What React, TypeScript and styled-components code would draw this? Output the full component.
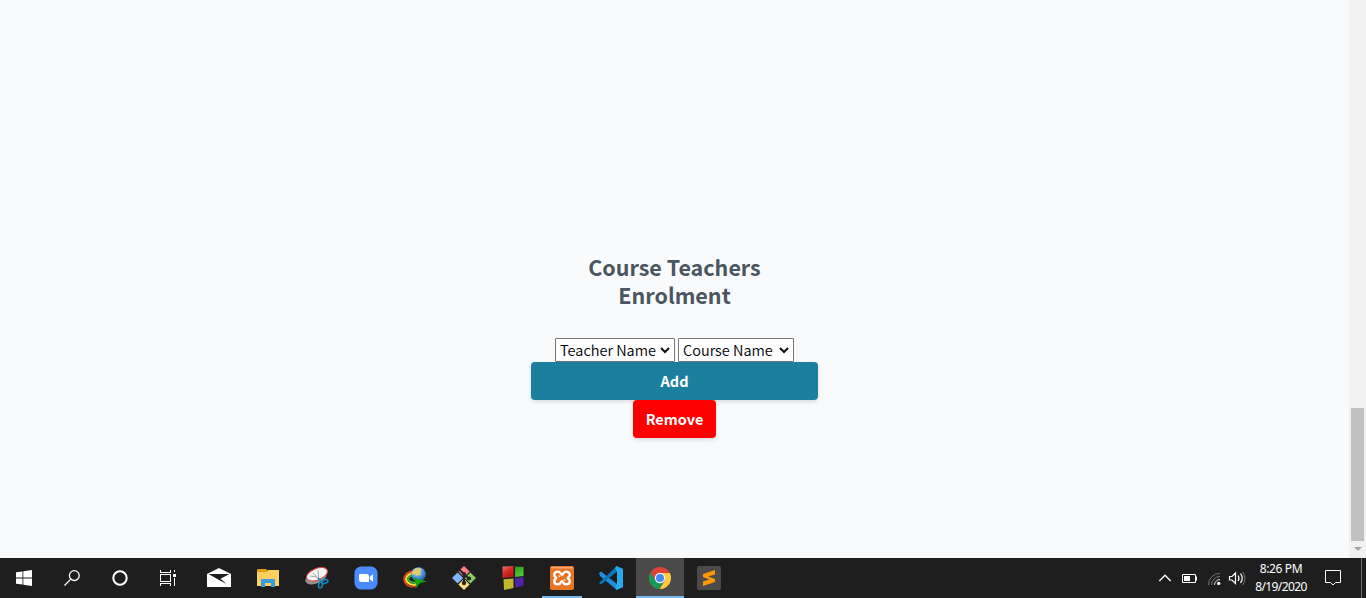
import React from "react";
import styled, { createGlobalStyle } from "styled-components";

const Global = createGlobalStyle`
  * { box-sizing: border-box; }
  body { margin: 0; background: #f8fafc; overflow: hidden; }
`;

const Screen = styled.div`
  display: flex;
  flex-direction: column;
  width: 1366px;
  height: 598px;
  font-family: "Noto Sans CJK SC", "Source Sans Pro", sans-serif;
`;

const Viewport = styled.div`
  display: flex;
  height: 558px;
`;

const Page = styled.main`
  flex: 1;
  display: flex;
  flex-direction: column;
  align-items: center;
  padding-top: 253px;
  background: #f8fafc;
`;

const Title = styled.h2`
  margin: 0 0 29px;
  width: 287px;
  color: #4a5560;
  font-size: 21.5px;
  font-weight: 700;
  line-height: 28px;
  text-align: center;
`;

const Fields = styled.div`
  display: flex;
  gap: 3px;
`;

const SelectBox = styled.button<{ $width: number }>`
  display: flex;
  align-items: center;
  justify-content: space-between;
  width: ${(p) => p.$width}px;
  height: 24px;
  padding: 0 4px;
  border: 1px solid #767676;
  border-radius: 1px;
  background: #fff;
  color: #000;
  font-family: inherit;
  font-size: 14.5px;
  font-weight: 350;
  line-height: 22px;
  white-space: nowrap;
`;

const Action = styled.button<{ $color: string; $width: number }>`
  width: ${(p) => p.$width}px;
  height: 38px;
  padding: 0;
  border: 0;
  border-radius: 4px;
  background: ${(p) => p.$color};
  box-shadow: 0 2px 4px rgba(0, 0, 0, 0.12);
  color: #fff;
  font-family: inherit;
  font-size: 14.5px;
  font-weight: 700;
  line-height: 38px;
`;

const Scrollbar = styled.div`
  display: flex;
  flex-direction: column;
  align-items: center;
  justify-content: flex-end;
  width: 17px;
  background: #f1f1f1;
`;

const Thumb = styled.div`
  width: 13px;
  height: 133px;
  background: #c1c1c1;
`;

const ScrollArrow = styled.div`
  display: flex;
  align-items: center;
  justify-content: center;
  height: 17px;
  padding-bottom: 1px;
`;

const Taskbar = styled.footer`
  display: flex;
  height: 40px;
  background: #1e1e1e;
`;

const SystemButtons = styled.div`
  display: flex;
  width: 195px;
`;

const Apps = styled.div`
  display: flex;
  flex: 1;
  gap: 1px;
`;

const Slot = styled.div<{ $active?: boolean }>`
  display: flex;
  align-items: center;
  justify-content: center;
  width: 48px;
  height: 40px;
  background: ${(p) => (p.$active ? "#4b4b4b" : "transparent")};
  box-shadow: ${(p) => (p.$active ? "inset 0 -2px #76b9ed" : "none")};
`;

const RunningSlot = styled(Slot)`
  width: 40px;
  margin: 0 4px;
  box-shadow: inset 0 -2px #76b9ed;
`;

const Tray = styled.div`
  display: flex;
  align-items: center;
  padding-right: 4px;
`;

const TrayIcons = styled.div`
  display: flex;
  align-items: center;
  width: 98px;
`;

const Clock = styled.div`
  width: 62px;
  color: #fff;
  font-family: "Noto Sans", "Segoe UI", sans-serif;
  font-size: 12px;
  letter-spacing: -0.6px;
  line-height: 18px;
  text-align: center;
`;

const Time = styled.div`
  letter-spacing: -0.35px;
`;

const Notifications = styled.div`
  display: flex;
  justify-content: center;
  width: 42px;
`;

const DesktopEdge = styled.div`
  width: 1px;
  height: 40px;
  margin-left: 7px;
  background: #6e6e6e;
`;

const Chevron = () => (
  <svg width="10" height="7" viewBox="0 0 10 7">
    <path d="M1 1 5 5 9 1" fill="none" stroke="#111" strokeWidth="2" />
  </svg>
);

const WindowsIcon = () => (
  <svg width="16" height="16" viewBox="0 0 16 16" fill="#fff">
    <path d="M0 2.3 6.5 1.4V7.5H0zM7.3 1.3 16 0V7.5H7.3zM0 8.4H6.5V14.6L0 13.7zM7.3 8.4H16V16L7.3 14.7z" />
  </svg>
);
const SearchIcon = () => (
  <svg width="16" height="16" viewBox="0 0 16 16" fill="none" stroke="#fff" strokeWidth="1.3">
    <circle cx="10.3" cy="5.6" r="4.9" />
    <path d="M6.8 9.1.5 15.5" />
  </svg>
);
const CortanaIcon = () => (
  <svg width="16" height="16" viewBox="0 0 16 16">
    <circle cx="8" cy="8" r="6.7" fill="none" stroke="#fff" strokeWidth="2" />
  </svg>
);
const TaskViewIcon = () => (
  <svg width="16" height="16" viewBox="0 0 16 16" fill="none" stroke="#fff" shapeRendering="crispEdges">
    <path d="M.5 0V2.5H10.5V0M.5 16V13.5H10.5V16M.5 4.5H10.5V11.5H.5zM14.5 0V2M14.5 8V16" />
    <path d="M13 4H16V7H13z" fill="#fff" stroke="none" />
  </svg>
);
const MailIcon = () => (
  <svg width="24" height="20" viewBox="0 0 24 20">
    <path d="M0 6 12 0 24 6V19H0z" fill="#fff" />
    <path d="M1.5 6H22.5L13.5 10.8 19.5 16 8.5 10z" fill="#1e1e1e" />
  </svg>
);
const FolderIcon = () => (
  <svg width="22" height="18" viewBox="0 0 22 18">
    <path d="M0 1Q0 0 1 0H9L10.5 1.5H21V17H0z" fill="#e3a008" />
    <path d="M0 3H10L11 1H22V17H0z" fill="#fcd060" />
    <path d="M4 18V11Q4 10 5 10H17Q18 10 18 11V18H14V14H8V18z" fill="#3c9bdc" />
  </svg>
);
const SnipIcon = () => (
  <svg width="24" height="22" viewBox="0 0 24 22">
    <ellipse cx="11" cy="10.5" rx="11.2" ry="6" transform="rotate(-22 11 10.5)" fill="#929292" />
    <ellipse cx="12" cy="7.3" rx="11" ry="5.8" transform="rotate(-22 12 7.3)" fill="#f6f5f5" stroke="#d94545" />
    <path d="M8 6 15 13M13 3 14 13M5 9 12 10" stroke="#a5a9ab" strokeWidth="1" />
    <g fill="none" stroke="#1b84bd" strokeWidth="1.7">
      <ellipse cx="19.8" cy="14.6" rx="3.2" ry="1.8" transform="rotate(-18 19.8 14.6)" />
      <ellipse cx="15.5" cy="18" rx="1.9" ry="3" transform="rotate(15 15.5 18)" />
      <path d="M13 11 17 15" />
    </g>
  </svg>
);
const ZoomIcon = () => (
  <svg width="24" height="24" viewBox="0 0 24 24">
    <rect x=".5" y=".5" width="23" height="23" rx="6.5" fill="#4a8cff" />
    <path d="M5 8H12.5Q15 8 15 10.5V16H7.5Q5 16 5 13.5zM15.8 10.8 19 8.3V15.7L15.8 13.3z" fill="#fff" />
  </svg>
);
const IdmIcon = () => (
  <svg width="24" height="22" viewBox="0 0 24 22">
    <defs>
      <radialGradient id="globe" cx=".4" cy=".3" r=".75">
        <stop stopColor="#d9efff" /><stop offset=".45" stopColor="#5aa2e5" /><stop offset="1" stopColor="#1450a6" />
      </radialGradient>
    </defs>
    <g fill="none" strokeWidth="2">
      <path d="M9 4.2C1 6.5-.5 12 2.8 16.5S10 20 14 18.5" stroke="#e33b22" />
      <path d="M9.5 6C3.5 8 1.5 12 4.5 15.2S11 18.2 14 17" stroke="#f5e52a" />
      <path d="M9.5 8C5.5 9.5 4 12 6 13.8S11 16.3 14 15.3" stroke="#3cae36" />
    </g>
    <circle cx="15.5" cy="7.5" r="7.3" fill="url(#globe)" />
    <path d="M9 5Q12 .8 17 1L18.5 3 17 5 18 8 13 8.5 11 7 9 8z" fill="#e0cc66" />
    <path d="M10 10.5 24 14.5 17 16 12.5 21.5 13 15.5z" fill="#13a711" />
  </svg>
);
const GitIcon = () => (
  <svg width="24" height="24" viewBox="0 0 24 24">
    <path d="M12 0 17.6 5.6 12 11.2 6.4 5.6z" fill="#ff7d85" />
    <path d="M18.4 6.4 24 12 18.4 17.6 12.8 12z" fill="#88cc60" />
    <path d="M12 12.8 17.6 18.4 12 24 6.4 18.4z" fill="#ffe07a" />
    <path d="M5.6 6.4 11.2 12 5.6 17.6 0 12z" fill="#80b4ff" />
    <path d="M7 3.5 12 8V18M12 8 17 13" stroke="#262626" strokeWidth="2" fill="none" />
    <g fill="#262626"><circle cx="12" cy="8" r="2.1" /><circle cx="17" cy="12.5" r="2.1" /><circle cx="12" cy="17" r="2.2" /></g>
  </svg>
);
const BlocksIcon = () => (
  <svg width="22" height="24" viewBox="0 0 22 24">
    <defs>
      <linearGradient id="redBlock" x2=".6" y2="1"><stop stopColor="#f08078" /><stop offset=".5" stopColor="#d52b24" /><stop offset="1" stopColor="#b51b16" /></linearGradient>
      <linearGradient id="greenBlock" x2=".6" y2="1"><stop stopColor="#2b941b" /><stop offset="1" stopColor="#55d03a" /></linearGradient>
    </defs>
    <path d="M.5.5 11.5 0V11L.5 12z" fill="url(#redBlock)" />
    <path d="M13 .5 21.5 1V10L13 11z" fill="url(#greenBlock)" />
    <path d="M1.5 13.2 11.5 12.5V22L2 24z" fill="#bdb82c" />
    <path d="M13 12.2 21.5 11.2V20L13 21.5z" fill="#5123ad" />
  </svg>
);
const XamppIcon = () => (
  <svg width="24" height="24" viewBox="0 0 24 24">
    <rect width="24" height="24" rx="2" fill="#e87524" />
    <path d="M1 1H23V2.5H1z" fill="#f5a574" />
    <path d="M12 8.7C10.8 8.7 10.8 5.6 8 5.6 5.6 5.6 4.2 7.2 4.2 9 4.2 10.8 6.2 11 6.2 12S4.2 13.2 4.2 15C4.2 16.8 5.6 18.4 8 18.4 10.8 18.4 10.8 15.3 12 15.3S13.2 18.4 16 18.4C18.4 18.4 19.8 16.8 19.8 15 19.8 13.2 17.8 13 17.8 12S19.8 10.8 19.8 9C19.8 7.2 18.4 5.6 16 5.6 13.2 5.6 13.2 8.7 12 8.7z" fill="none" stroke="#fff" strokeWidth="2.4" strokeLinejoin="round" />
    <path d="M9.5 9.5V10.8M14.5 13.2V14.5" stroke="#fff" strokeWidth="1.6" />
  </svg>
);
const CodeIcon = () => (
  <svg width="24" height="24" viewBox="0 0 24 24">
    <path d="M0 7 2 5.5 18 18V24L1 10z" fill="#208fdd" />
    <path d="M0 17 17.5.2V6L2 18.5z" fill="#0877bb" />
    <path d="M17.5 0 24 2.7V21.3L17.5 24 16 22 18 18V6L16 2z" fill="#28a9ee" />
  </svg>
);
const ChromeIcon = () => (
  <svg width="22" height="22" viewBox="0 0 22 22">
    <circle cx="11" cy="11" r="11" fill="#dc4437" />
    <path d="M1.5 5.5A11 11 0 0 0 10.8 22L15.5 13.5H6.5z" fill="#149b57" />
    <path d="M11 6H20.8A11 11 0 0 1 10.8 22L15.8 13.5z" fill="#ffcd42" />
    <circle cx="11" cy="11" r="5.2" fill="#f5f5f5" />
    <circle cx="11" cy="11" r="4" fill="#4688f4" />
  </svg>
);
const SublimeIcon = () => (
  <svg width="24" height="24" viewBox="0 0 24 24">
    <rect width="24" height="24" rx="2" fill="#4b4b4b" />
    <path d="M6 8 18 4V8.5L11 10.5 18 13V16L6 20V15.5L12.5 13.5 6 11z" fill="#ff9800" />
  </svg>
);

const TraySymbols = () => (
  <svg width="97" height="24" viewBox="0 0 97 24" fill="none" stroke="#fff">
    <path d="M7.3 15 13 9.2 18.7 15" strokeWidth="1.3" />
    <path d="M30.5 8.5H43.5V16.5H30.5zM44.5 10.5V14.5" />
    <path d="M32 10H38V15H32z" fill="#fff" stroke="none" />
    <path d="M56.5 19A11 11 0 0 1 68 7.5M59.5 19A8.5 8.5 0 0 1 68 10.5" stroke="#777" />
    <path d="M62.5 19A5.5 5.5 0 0 1 68 13.5" stroke="#ddd" />
    <circle cx="66.7" cy="17.4" r="1.7" fill="#fff" stroke="none" />
    <path d="M77.5 10.5H80L83.5 7V17.5L80 14H77.5zM86 9.5Q88 12 86 15M88.5 7.5Q92 12.3 88.5 17" strokeWidth="1.2" />
    <path d="M90.8 6Q95 12.3 90.8 19" stroke="#777" />
  </svg>
);

const apps = [MailIcon, FolderIcon, SnipIcon, ZoomIcon, IdmIcon, GitIcon, BlocksIcon];

export default function App() {
  return (
    <Screen>
      <Global />
      <Viewport>
        <Page>
          <Title>Course Teachers<br />Enrolment</Title>
          <Fields>
            <SelectBox $width={120}>Teacher Name<Chevron /></SelectBox>
            <SelectBox $width={116}>Course Name<Chevron /></SelectBox>
          </Fields>
          <Action $color="#1c7f9e" $width={287}>Add</Action>
          <Action $color="#ff0000" $width={83}>Remove</Action>
        </Page>
        <Scrollbar>
          <Thumb />
          <ScrollArrow>
            <svg width="8" height="4" viewBox="0 0 8 4"><path d="M0 0H8L4 4z" fill="#a3a3a3" /></svg>
          </ScrollArrow>
        </Scrollbar>
      </Viewport>
      <Taskbar>
        <SystemButtons>
          <Slot><WindowsIcon /></Slot>
          <Slot><SearchIcon /></Slot>
          <Slot><CortanaIcon /></Slot>
          <Slot><TaskViewIcon /></Slot>
        </SystemButtons>
        <Apps>
          {apps.map((Icon, i) => <Slot key={i}><Icon /></Slot>)}
          <RunningSlot><XamppIcon /></RunningSlot>
          <Slot><CodeIcon /></Slot>
          <Slot $active><ChromeIcon /></Slot>
          <Slot><SublimeIcon /></Slot>
        </Apps>
        <Tray>
          <TrayIcons><TraySymbols /></TrayIcons>
          <Clock><Time>8:26 PM</Time>8/19/2020</Clock>
          <Notifications>
            <svg width="16" height="16" viewBox="0 0 16 16" fill="none" stroke="#fff">
              <path d="M.5.5H15.5V12.5H10.5L8 15 5.5 12.5H.5z" />
            </svg>
          </Notifications>
          <DesktopEdge />
        </Tray>
      </Taskbar>
    </Screen>
  );
}
